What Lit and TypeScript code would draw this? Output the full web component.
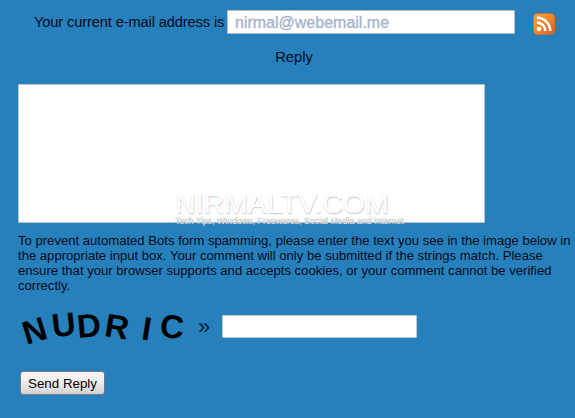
import { LitElement, html, css } from "lit";
import { customElement } from "lit/decorators.js";

const LETTERS: [string, number, number, number][] = [
  ["N", -17, 2, 1],
  ["U", -6, -4, 5],
  ["D", -5, -3, 1],
  ["R", 9, -2, 4],
  ["I", 9, 0, 14],
  ["C", 5, -2, 8],
];

@customElement("app-root")
export class AppRoot extends LitElement {
  static styles = css`
    :host {
      display: block;
      position: relative;
      width: 575px;
      height: 418px;
      overflow: hidden;
      background: #2680bb;
      color: #000a1c;
      font-family: "Liberation Sans", Arial, sans-serif;
    }
    .email-row {
      display: flex;
      align-items: flex-start;
      padding: 10px 0 0 34px;
      font-size: 14.67px;
    }
    .email-label { line-height: 24px; width: 193px; letter-spacing: -0.13px; white-space: nowrap; }
    .email {
      box-sizing: border-box;
      width: 288px;
      height: 24px;
      padding: 0 7px;
      background: #fff;
      border: 1px solid #b9bcc4;
      border-radius: 1px;
      color: #a8b3cc;
      font: 16px/23px "Liberation Sans", Arial, sans-serif;
      -webkit-text-stroke: 0.35px #a8b3cc;
      white-space: nowrap;
    }
    .rss { display: block; margin: 3px 0 0 18px; width: 22px; height: 22px; }
    .reply {
      margin-top: 12px;
      text-align: center;
      width: 588px;
      font-size: 14.67px;
      line-height: 20px;
    }
    .comment {
      box-sizing: border-box;
      display: block;
      margin: 17px 0 0 18px;
      width: 467px;
      height: 139px;
      background: #fff;
      border: 1px solid #bfc3c9;
      border-radius: 1px;
    }
    .notice {
      margin: 10px 0 0 18px;
      width: 557px;
      font-size: 13.1px;
      line-height: 15px;
    }
    .captcha-row {
      display: flex;
      align-items: flex-start;
      margin: 17px 0 0 22px;
    }
    .captcha {
      display: flex;
      width: 176px;
      height: 40px;
      font: bold 33px/37px "Liberation Sans", Arial, sans-serif;
      color: #000;
    }
    .captcha span { display: block; transform-origin: 50% 50%; }
    .raquo {
      width: 24px;
      margin-top: 5px;
      font-size: 22px;
      line-height: 24px;
      color: #001a38;
    }
    .code {
      box-sizing: border-box;
      margin-top: 5px;
      width: 195px;
      height: 23px;
      background: #fff;
      border: 1px solid #c4c8cc;
      border-radius: 1px;
    }
    .send {
      box-sizing: border-box;
      display: block;
      margin: 21px 0 0 20px;
      width: 85px;
      height: 24px;
      padding: 0;
      border: 1px solid #76787a;
      border-radius: 3px;
      background: linear-gradient(#f6f6f6, #ececec 50%, #d2d2d2);
      color: #000;
      font: 13.33px "Liberation Sans", Arial, sans-serif;
    }
    .mark {
      position: absolute;
      left: 175px;
      top: 189px;
      width: 230px;
      pointer-events: none;
      color: #fff;
    }
    .mark-title {
      font-size: 28.5px;
      line-height: 28px;
      white-space: nowrap;
      color: #fff;
      -webkit-text-stroke: 0.5px #fff;
      text-shadow: 0 1px 1px #bcc0c4, 1px 1px 1px #d0d2d6;
    }
    .mark-tag {
      font-size: 8.8px;
      line-height: 9px;
      white-space: nowrap;
      color: #e2e6ea;
      text-shadow: 0 0 1px #8b9198;
    }
  `;

  private rss() {
    return html`<svg class="rss" viewBox="0 0 22 22" aria-label="RSS">
      <defs>
        <linearGradient id="g" x1="0" y1="0" x2="1" y2="1">
          <stop offset="0" stop-color="#f9a24a"></stop>
          <stop offset="0.55" stop-color="#f0822c"></stop>
          <stop offset="1" stop-color="#cf5f22"></stop>
        </linearGradient>
      </defs>
      <rect x="0.5" y="0.5" width="21" height="21" rx="4" fill="url(#g)" stroke="#d26f2c"></rect>
      <circle cx="6" cy="16" r="2.3" fill="#fff"></circle>
      <path d="M4 9.6a8.4 8.4 0 0 1 8.4 8.4" fill="none" stroke="#fff" stroke-width="2.6"></path>
      <path d="M4 4.8a13.2 13.2 0 0 1 13.2 13.2" fill="none" stroke="#fff" stroke-width="2.6"></path>
    </svg>`;
  }

  render() {
    return html`
      <div class="email-row">
        <span class="email-label">Your current e-mail address is</span>
        <div class="email">nirmal@webemail.me</div>
        ${this.rss()}
      </div>
      <div class="reply">Reply</div>
      <div class="comment"></div>
      <div class="notice">
        To prevent automated Bots form spamming, please enter the text you see in the image below in
        the appropriate input box. Your comment will only be submitted if the strings match. Please
        ensure that your browser supports and accepts cookies, or your comment cannot be verified
        correctly.
      </div>
      <div class="captcha-row">
        <div class="captcha">
          ${LETTERS.map(
            ([c, r, y, m]) =>
              html`<span style="margin-left: ${m}px; transform: translateY(${y}px) rotate(${r}deg)">${c}</span>`
          )}
        </div>
        <div class="raquo">»</div>
        <div class="code"></div>
      </div>
      <button class="send">Send Reply</button>
      <div class="mark">
        <div class="mark-title">NIRMALTV.COM</div>
        <div class="mark-tag">Tech Tips, Windows, Freewares, Social Media and Internet</div>
      </div>
    `;
  }
}
